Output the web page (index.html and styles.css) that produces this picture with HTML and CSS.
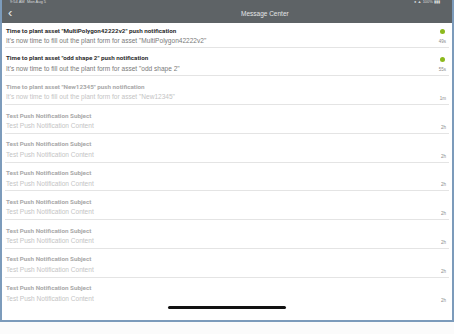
FILE: index.html
```html
<!DOCTYPE html>
<html lang="en">
<head>
    <meta charset="UTF-8">
    <meta name="viewport" content="width=device-width, initial-scale=1.0">
    <title>Message Center</title>
    <link rel="stylesheet" href="styles.css">
</head>
<body>
    <div class="frame">
        <!-- Header bar -->
        <div class="header">
            <div class="status">
                <span>9:54 AM&nbsp;&nbsp;Mon Aug 5</span>
                <span class="status-right">&#9679; &#9650; 100% &#9646;&#9646;&#9646;</span>
            </div>
            <div class="nav">
                <span class="back">&#8249;</span>
                <span class="title">Message Center</span>
            </div>
        </div>

        <!-- Daftar pesan -->
        <ul class="list">
            <li class="row first unread">
                <div class="text">
                    <div class="subject">Time to plant asset "MultiPolygon42222v2" push notification</div>
                    <div class="content">It's now time to fill out the plant form for asset "MultiPolygon42222v2"</div>
                </div>
                <div class="meta"><span class="dot"></span><span class="time">49s</span></div>
            </li>
            <li class="row unread">
                <div class="text">
                    <div class="subject">Time to plant asset "odd shape 2" push notification</div>
                    <div class="content">It's now time to fill out the plant form for asset "odd shape 2"</div>
                </div>
                <div class="meta"><span class="dot"></span><span class="time">55s</span></div>
            </li>
            <li class="row">
                <div class="text">
                    <div class="subject">Time to plant asset "New12345" push notification</div>
                    <div class="content">It's now time to fill out the plant form for asset "New12345"</div>
                </div>
                <div class="meta"><span class="time">1m</span></div>
            </li>
            <li class="row">
                <div class="text">
                    <div class="subject">Test Push Notification Subject</div>
                    <div class="content">Test Push Notification Content</div>
                </div>
                <div class="meta"><span class="time">2h</span></div>
            </li>
            <li class="row">
                <div class="text">
                    <div class="subject">Test Push Notification Subject</div>
                    <div class="content">Test Push Notification Content</div>
                </div>
                <div class="meta"><span class="time">2h</span></div>
            </li>
            <li class="row">
                <div class="text">
                    <div class="subject">Test Push Notification Subject</div>
                    <div class="content">Test Push Notification Content</div>
                </div>
                <div class="meta"><span class="time">2h</span></div>
            </li>
            <li class="row">
                <div class="text">
                    <div class="subject">Test Push Notification Subject</div>
                    <div class="content">Test Push Notification Content</div>
                </div>
                <div class="meta"><span class="time">2h</span></div>
            </li>
            <li class="row">
                <div class="text">
                    <div class="subject">Test Push Notification Subject</div>
                    <div class="content">Test Push Notification Content</div>
                </div>
                <div class="meta"><span class="time">2h</span></div>
            </li>
            <li class="row">
                <div class="text">
                    <div class="subject">Test Push Notification Subject</div>
                    <div class="content">Test Push Notification Content</div>
                </div>
                <div class="meta"><span class="time">2h</span></div>
            </li>
            <li class="row last">
                <div class="text">
                    <div class="subject">Test Push Notification Subject</div>
                    <div class="content">Test Push Notification Content</div>
                </div>
                <div class="meta"><span class="time">2h</span></div>
            </li>
        </ul>

        <!-- Home indicator -->
        <div class="home-bar"></div>
    </div>
</body>
</html>
```

FILE: styles.css
```css
/* Reset */
* {
    margin: 0;
    padding: 0;
    box-sizing: border-box;
}

body {
    width: 454px;
    height: 334px;
    background-color: #fbfbfb;
    font-family: 'Liberation Sans', Arial, sans-serif;
    overflow: hidden;
}

/* Bingkai layar */
.frame {
    position: relative;
    width: 454px;
    height: 322px;
    background-color: #fff;
    border-left: 2px solid #7c9bbb;
    border-right: 2px solid #7c9bbb;
    border-bottom: 2px solid #7c9bbb;
    overflow: hidden;
}

/* Header abu-abu */
.header {
    height: 22.5px;
    background-color: #5e6366;
    color: #eceeee;
}

.status {
    display: flex;
    justify-content: space-between;
    height: 4px;
    padding: 0 12px 0 8px;
    font-size: 4px;
    line-height: 4px;
    color: #d8dadb;
}

.nav {
    display: flex;
    align-items: center;
    height: 18.5px;
    padding-left: 6px;
}

.back {
    font-size: 13px;
    line-height: 1;
    color: #e6e8e9;
    width: 233px;
    margin-top: -2px;
}

.title {
    font-size: 6.5px;
    color: #e4e6e7;
}

/* Daftar pesan */
.list {
    list-style: none;
}

.row {
    display: flex;
    justify-content: space-between;
    height: 28.75px;
    margin: 0 3px;
    padding: 6.5px 3px 0 1px;
    border-bottom: 1px solid #e4e4e4;
}

.row.first {
    height: 25px;
    padding-top: 4px;
}

.row.last {
    border-bottom: none;
}

.subject {
    font-family: Roboto, 'Liberation Sans', sans-serif;
    font-size: 6.25px;
    font-weight: bold;
    line-height: 9.5px;
    color: #a8a8a8;
}

.content {
    font-size: 6.55px;
    line-height: 9.5px;
    color: #c4c4c4;
}

.unread .subject {
    color: #2e2e2e;
}

.unread .content {
    color: #7a7a7a;
}

.meta {
    display: flex;
    flex-direction: column;
    align-items: flex-end;
    justify-content: flex-end;
    padding-bottom: 3px;
}

.dot {
    width: 5px;
    height: 5px;
    border-radius: 50%;
    background-color: #8cb91d;
    margin: 0 1px 5px 0;
}

.time {
    font-size: 4.5px;
    line-height: 5px;
    color: #8a8a8a;
}

/* Indikator home */
.home-bar {
    position: absolute;
    left: 166px;
    top: 306px;
    width: 118px;
    height: 2.5px;
    border-radius: 2px;
    background-color: #111;
}
```
